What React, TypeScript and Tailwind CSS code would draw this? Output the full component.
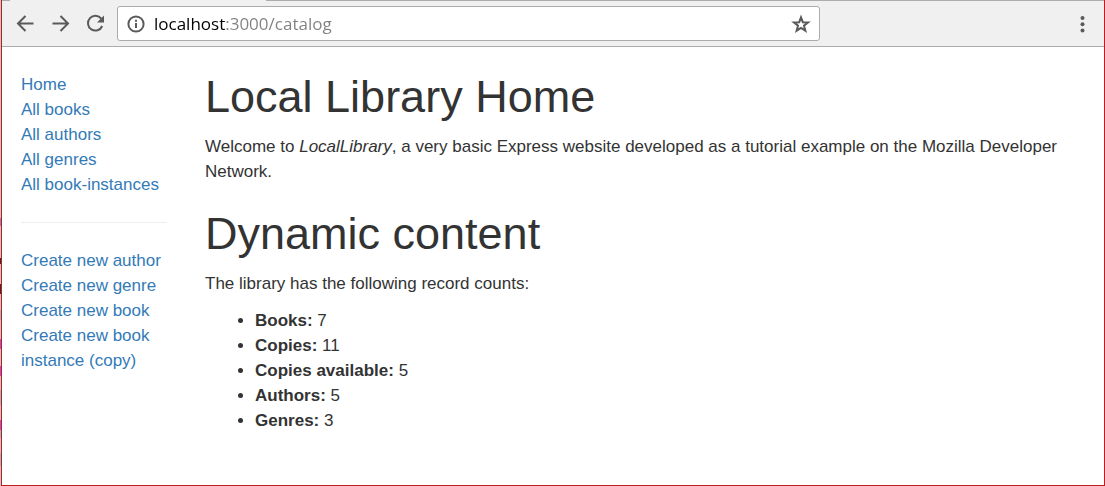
const browseLinks = ['Home', 'All books', 'All authors', 'All genres', 'All book-instances'];
const createLinks = [
  'Create new author',
  'Create new genre',
  'Create new book',
  'Create new book instance (copy)',
];
const counts = [
  { label: 'Books:', value: 7 },
  { label: 'Copies:', value: 11 },
  { label: 'Copies available:', value: 5 },
  { label: 'Authors:', value: 5 },
  { label: 'Genres:', value: 3 },
];

function LinkList({ items }: { items: string[] }) {
  return (
    <ul>
      {items.map((item) => (
        <li key={item}>
          <a href="#" className="text-[#337ab7] hover:underline">
            {item}
          </a>
        </li>
      ))}
    </ul>
  );
}

function Toolbar() {
  return (
    <header className="flex h-[46px] items-center border-b border-[#acacac] bg-[#f0f0f0] pr-3 pl-[11px] text-[#5a5a5a]">
      <div className="flex shrink-0 gap-[11px]">
        <button type="button" aria-label="Back" className="size-6">
          <svg viewBox="0 0 24 24" className="size-6" fill="none" stroke="currentColor" strokeWidth="2">
            <path d="M20.500 11.500H5.500M12.500 4L5 11.500l7.500 7.500" />
          </svg>
        </button>
        <button type="button" aria-label="Forward" className="size-6">
          <svg viewBox="0 0 24 24" className="size-6" fill="none" stroke="currentColor" strokeWidth="2">
            <path d="M4.500 11.500h15M12.500 4l7.500 7.500-7.500 7.500" />
          </svg>
        </button>
        <button type="button" aria-label="Reload" className="size-6">
          <svg viewBox="0 0 24 24" className="size-6" fill="none" stroke="currentColor" strokeWidth="2">
            <path d="M18.300 6.700A7.400 7.400 0 1 0 19.200 14" />
            <path d="M21 3.500V10.500h-7z" fill="currentColor" stroke="none" />
          </svg>
        </button>
      </div>
      <div className="ml-[10px] flex h-[35px] w-[703px] items-center rounded-[3px] border border-[#acacac] bg-white px-2">
        <svg viewBox="0 0 20 20" className="size-5 shrink-0" fill="none" stroke="currentColor" strokeWidth="2">
          <circle cx="10" cy="10" r="7.6" />
          <path d="M10 9v5M10 5.8v2" />
        </svg>
        <input
          type="text"
          aria-label="Address"
          defaultValue="localhost:3000/catalog"
          className="ml-2 h-7 min-w-0 flex-1 bg-[linear-gradient(90deg,#000_71px,#808080_71px)] bg-clip-text font-['Open_Sans',sans-serif] text-[17px] text-transparent caret-black outline-none"
        />
        <button type="button" aria-label="Bookmark this page" className="size-5">
          <svg viewBox="0 0 20 20" className="size-5" fill="none" stroke="currentColor" strokeWidth="2">
            <path d="M10 3.4l1.8 4.8 5.3.2-4.1 3.3 1.4 5L10 13.9l-4.4 2.8 1.4-5-4.1-3.3 5.3-.2z" />
          </svg>
        </button>
      </div>
      <button type="button" aria-label="Browser menu" className="ml-auto size-5">
        <svg viewBox="0 0 20 20" className="size-5" fill="currentColor">
          <circle cx="10.5" cy="4" r="2" />
          <circle cx="10.5" cy="10.3" r="2" />
          <circle cx="10.5" cy="16.6" r="2" />
        </svg>
      </button>
    </header>
  );
}

export default function App() {
  return (
    <div className="flex min-h-screen bg-white font-['Liberation_Sans',Arial,sans-serif] text-[17px] leading-[25px] text-[#333]">
      <div className="w-px shrink-0 bg-[linear-gradient(180deg,#c8c8c8_218px,#8f86b8_218px_226px,#c8c8c8_226px_258px,#333_258px_264px,#c8c8c8_264px_284px,#333_284px_294px,#c8c8c8_294px_310px,#8fbfc3_310px_320px,#c8c8c8_320px_339px,#b453c8_339px_349px,#c8c8c8_349px_366px,#b453c8_366px_376px,#c8c8c8_376px_390px,#8fbfc3_390px_405px,#c8c8c8_405px_420px,#b453c8_420px_430px,#8fbfc3_430px_438px,#c8c8c8_438px_453px,#8fbfc3_453px_466px,#c8c8c8_466px)]" />
      <div className="flex min-w-0 flex-1 flex-col border-x border-b border-[#c01c20]">
        <div className="flex h-px bg-[#acacac]">
          <div className="ml-2 w-64 bg-[#f0f0f0]" />
        </div>
        <Toolbar />
        <div className="flex pt-[25px] pr-[18px] pl-[19px]">
          <nav aria-label="Library" className="w-[146px] shrink-0">
            <LinkList items={browseLinks} />
            <hr className="my-[25px] border-[#eee]" />
            <LinkList items={createLinks} />
          </nav>
          <main className="ml-[38px] min-w-0 flex-1">
            <h1 className="mb-3 text-[45px] leading-[50px]">Local Library Home</h1>
            <p className="mb-[25px]">
              Welcome to <em>LocalLibrary</em>, a very basic Express website developed as a tutorial
              example on the Mozilla Developer Network.
            </p>
            <h1 className="mb-3 text-[45px] leading-[50px]">Dynamic content</h1>
            <p className="mb-3">The library has the following record counts:</p>
            <ul className="list-disc pl-[50px]">
              {counts.map(({ label, value }) => (
                <li key={label}>
                  <strong>{label}</strong> {value}
                </li>
              ))}
            </ul>
          </main>
        </div>
      </div>
    </div>
  );
}
